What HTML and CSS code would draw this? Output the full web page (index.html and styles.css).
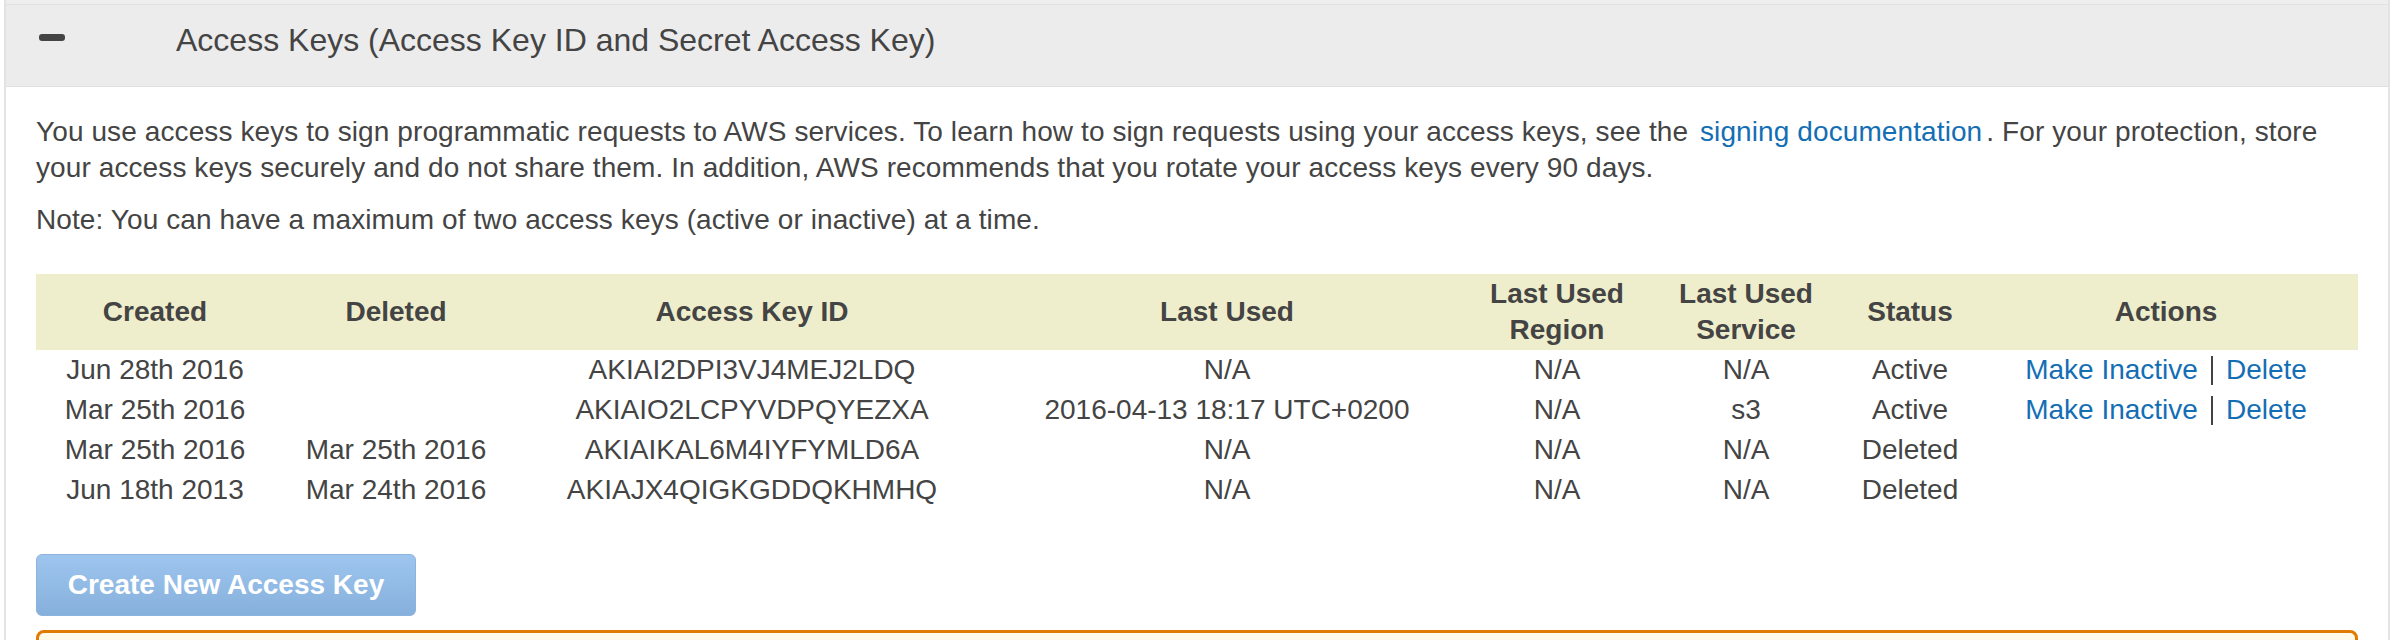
FILE: index.html
```html
<!DOCTYPE html>
<html>
<head>
<meta charset="utf-8">
<link rel="stylesheet" href="styles.css">
</head>
<body>
<div class="panel">
  <div class="prev-strip"></div>
  <div class="section-header">
    <span class="toggle-minus"></span>
    <span class="section-title">Access Keys (Access Key ID and Secret Access Key)</span>
  </div>
  <div class="section-body">
    <p class="intro">You use access keys to sign programmatic requests to AWS services. To learn how to sign requests using your access keys, see the <a class="link doc-link" href="#">signing documentation</a>. For your protection, store your access keys securely and do not share them. In addition, AWS recommends that you rotate your access keys every 90 days.</p>
    <p class="note">Note: You can have a maximum of two access keys (active or inactive) at a time.</p>
    <table class="keys-table">
      <colgroup>
        <col class="c-created">
        <col class="c-deleted">
        <col class="c-id">
        <col class="c-used">
        <col class="c-region">
        <col class="c-service">
        <col class="c-status">
        <col class="c-actions">
      </colgroup>
      <thead>
        <tr>
          <th>Created</th>
          <th>Deleted</th>
          <th>Access Key ID</th>
          <th>Last Used</th>
          <th>Last Used<br>Region</th>
          <th>Last Used<br>Service</th>
          <th>Status</th>
          <th>Actions</th>
        </tr>
      </thead>
      <tbody>
        <tr>
          <td>Jun 28th 2016</td>
          <td></td>
          <td>AKIAI2DPI3VJ4MEJ2LDQ</td>
          <td>N/A</td>
          <td>N/A</td>
          <td>N/A</td>
          <td>Active</td>
          <td><a class="link" href="#">Make Inactive</a><span class="sep"></span><a class="link" href="#">Delete</a></td>
        </tr>
        <tr>
          <td>Mar 25th 2016</td>
          <td></td>
          <td>AKIAIO2LCPYVDPQYEZXA</td>
          <td>2016-04-13 18:17 UTC+0200</td>
          <td>N/A</td>
          <td>s3</td>
          <td>Active</td>
          <td><a class="link" href="#">Make Inactive</a><span class="sep"></span><a class="link" href="#">Delete</a></td>
        </tr>
        <tr>
          <td>Mar 25th 2016</td>
          <td>Mar 25th 2016</td>
          <td>AKIAIKAL6M4IYFYMLD6A</td>
          <td>N/A</td>
          <td>N/A</td>
          <td>N/A</td>
          <td>Deleted</td>
          <td></td>
        </tr>
        <tr>
          <td>Jun 18th 2013</td>
          <td>Mar 24th 2016</td>
          <td>AKIAJX4QIGKGDDQKHMHQ</td>
          <td>N/A</td>
          <td>N/A</td>
          <td>N/A</td>
          <td>Deleted</td>
          <td></td>
        </tr>
      </tbody>
    </table>
    <button class="create-btn" type="button">Create New Access Key</button>
    <div class="warning-box"></div>
  </div>
</div>
</body>
</html>
```

FILE: styles.css
```css
html, body {
  margin: 0;
  padding: 0;
  background: #ffffff;
}

body {
  font-family: "Liberation Sans", Arial, Helvetica, sans-serif;
  color: #444444;
  overflow: hidden;
}

.panel {
  margin-left: 4px;
  width: 2382px;
  border-left: 2px solid #e3e3e3;
  border-right: 2px solid #e3e3e3;
  min-height: 700px;
}

.prev-strip {
  height: 4px;
  background: #eeeeee;
}

.section-header {
  display: flex;
  align-items: flex-start;
  background: #ececec;
  border-top: 1px solid #e2e2e2;
  border-bottom: 1px solid #e0e0e0;
  padding: 17px 0 28px 33px;
}

.toggle-minus {
  flex: none;
  width: 26px;
  height: 7px;
  margin-top: 12px;
  border-radius: 3px;
  background: #444444;
}

.section-title {
  margin-left: 111px;
  font-size: 32px;
  line-height: 36px;
  color: #444444;
}

.section-body {
  padding: 27px 30px 0 30px;
}

.intro,
.note {
  margin: 0;
  font-size: 28px;
  line-height: 36px;
  letter-spacing: 0.1px;
}

.note {
  margin-top: 16px;
}

.link {
  color: #146eb4;
  text-decoration: none;
}

.doc-link {
  margin: 0 4px;
}

.keys-table {
  margin-top: 36px;
  width: 2322px;
  table-layout: fixed;
  border-collapse: collapse;
  border-spacing: 0;
}

.c-created { width: 238px; }
.c-deleted { width: 244px; }
.c-id { width: 468px; }
.c-used { width: 482px; }
.c-region { width: 178px; }
.c-service { width: 200px; }
.c-status { width: 128px; }
.c-actions { width: 384px; }

.keys-table th {
  background: #eeeecc;
  height: 76px;
  padding: 2px 0;
  box-sizing: border-box;
  font-size: 28px;
  line-height: 36px;
  font-weight: bold;
  text-align: center;
  vertical-align: middle;
  color: #444444;
}

.keys-table td {
  height: 40px;
  padding: 2px 0;
  box-sizing: border-box;
  font-size: 28px;
  line-height: 36px;
  text-align: center;
  vertical-align: middle;
  white-space: nowrap;
  color: #444444;
}

.sep {
  display: inline-block;
  width: 2px;
  height: 29px;
  margin: 0 13px 0 13px;
  background: #444444;
  vertical-align: -6px;
}

.create-btn {
  display: block;
  margin-top: 44px;
  width: 380px;
  height: 62px;
  padding: 0;
  border: 1px solid #8cb3dc;
  border-radius: 6px;
  background: linear-gradient(to bottom, #9dc5ee, #86b0dc);
  color: #ffffff;
  font-family: "Liberation Sans", Arial, Helvetica, sans-serif;
  font-size: 28px;
  font-weight: bold;
  line-height: 36px;
  text-align: center;
  cursor: default;
}

.warning-box {
  margin-top: 14px;
  height: 90px;
  border: 3px solid #e07b00;
  border-radius: 8px;
  background: #fffbe8;
}
```
